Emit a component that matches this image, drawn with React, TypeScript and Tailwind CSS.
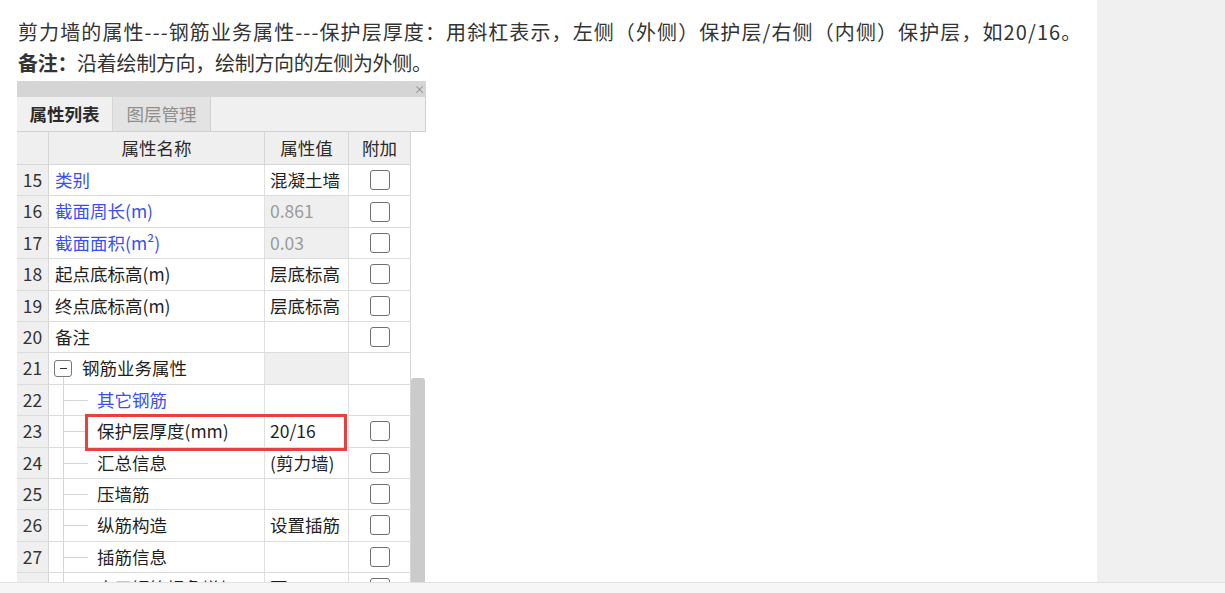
const FONT = '"Microsoft YaHei", "Noto Sans CJK SC", "Noto Sans", sans-serif';

type Row = {
  no: number;
  name: string;
  value?: string;
  blue?: boolean;
  grayValue?: boolean;
  check?: boolean;
  level?: 0 | 1 | 2;
  mark?: boolean;
};

const ROWS: Row[] = [
  { no: 15, name: '类别', value: '混凝土墙', blue: true, check: true },
  { no: 16, name: '截面周长(m)', value: '0.861', blue: true, grayValue: true, check: true },
  { no: 17, name: '截面面积(m²)', value: '0.03', blue: true, grayValue: true, check: true },
  { no: 18, name: '起点底标高(m)', value: '层底标高', check: true },
  { no: 19, name: '终点底标高(m)', value: '层底标高', check: true },
  { no: 20, name: '备注', check: true },
  { no: 21, name: '钢筋业务属性', level: 1, grayValue: true },
  { no: 22, name: '其它钢筋', level: 2, blue: true },
  { no: 23, name: '保护层厚度(mm)', value: '20/16', level: 2, check: true, mark: true },
  { no: 24, name: '汇总信息', value: '(剪力墙)', level: 2, check: true },
  { no: 25, name: '压墙筋', level: 2, check: true },
  { no: 26, name: '纵筋构造', value: '设置插筋', level: 2, check: true },
  { no: 27, name: '插筋信息', level: 2, check: true },
  { no: 28, name: '水平钢筋拐角增加', value: '否', level: 2, check: true },
];

function Checkbox() {
  return <span className="block w-[20px] h-[20px] rounded-[3px] border border-[#6f6f6f] bg-white" />;
}

function NameCell({ row }: { row: Row }) {
  const color = row.blue ? 'text-[#3a4ff0]' : 'text-[#1f1f1f]';
  if (row.level === 1) {
    return (
      <div className="relative flex items-center h-full pl-[5px]">
        <span className="relative z-10 flex items-center justify-center w-[18px] h-[17px] rounded-[3px] border border-[#777] bg-white">
          <span className="block w-[7px] h-[1.5px] bg-[#333]" />
        </span>
        <span className="ml-[10px] text-[#1f1f1f]">{row.name}</span>
        {/* tree trunk going down */}
        <span className="absolute left-[14px] top-[24px] bottom-0 w-px bg-[#d4d4d4]" />
      </div>
    );
  }
  if (row.level === 2) {
    return (
      <div className="relative flex items-center h-full pl-[48px]">
        <span className="absolute left-[14px] top-0 bottom-0 w-px bg-[#d4d4d4]" />
        <span className="absolute left-[14px] top-1/2 w-[25px] h-px bg-[#d4d4d4]" />
        <span className={color}>{row.name}</span>
      </div>
    );
  }
  return <div className={`flex items-center h-full pl-[6px] ${color}`}>{row.name}</div>;
}

function PropertyPanel() {
  return (
    <div className="mt-[3px] ml-[17px] w-[409px] flex-1 flex flex-col overflow-hidden text-[17.5px]" style={{ fontFamily: FONT }}>
      <div className="h-[16px] bg-[#d5d5d5] flex items-center justify-end pr-[1px] shrink-0">
        <span className="text-[11px] leading-none text-[#8a8a8a]">×</span>
      </div>
      <div className="h-[35px] shrink-0 bg-[#f0f0f0] border-b border-r border-[#d0d0d0] flex">
        <div className="w-[96px] flex items-center justify-center font-bold text-[#2a2a2a] border-r border-[#d6d6d6]">属性列表</div>
        <div className="w-[98px] flex items-center justify-center text-[#8f8f8f] bg-[#e3e3e3] border-r border-[#d0d0d0]">图层管理</div>
      </div>
      <div className="flex flex-1 min-h-0">
        <div className="w-[394px] flex flex-col">
          <div className="grid grid-cols-[32px_216px_84px_62px] h-[33px] shrink-0 bg-[#efefef] border-b border-[#d6d6d6] text-[#2a2a2a]">
            <div className="border-r border-[#d6d6d6]" />
            <div className="flex items-center justify-center border-r border-[#d6d6d6]">属性名称</div>
            <div className="flex items-center justify-center border-r border-[#d6d6d6]">属性值</div>
            <div className="flex items-center justify-center border-r border-[#d6d6d6]">附加</div>
          </div>
          {ROWS.map(row => (
            <div key={row.no} className="relative grid grid-cols-[32px_216px_84px_62px] h-[31.4px] shrink-0 border-b border-[#dcdcdc] bg-white">
              <div className="flex items-center justify-center bg-[#efefef] border-r border-[#d6d6d6] text-[#333]">{row.no}</div>
              <div className="border-r border-[#e0e0e0]">
                <NameCell row={row} />
              </div>
              <div className={`flex items-center pl-[5px] border-r border-[#e0e0e0] whitespace-nowrap ${row.grayValue ? 'bg-[#efefef] text-[#9a9a9a]' : 'text-[#1f1f1f]'}`}>
                {row.value}
              </div>
              <div className="flex items-center justify-center border-r border-[#d6d6d6]">
                {row.check && <Checkbox />}
              </div>
              {row.mark && (
                <div className="absolute z-20 left-[68px] top-[-2px] w-[262px] h-[37px] border-[3px] border-[#e8403f] pointer-events-none" />
              )}
            </div>
          ))}
        </div>
        <div className="w-[15px] bg-white flex justify-end pr-[1px]">
          <div className="mt-[246px] w-[7px] flex-1 rounded-t-[3px] bg-[#cbcbcb]" />
        </div>
      </div>
    </div>
  );
}

export default function App() {
  return (
    <div className="w-[1225px] h-[593px] flex flex-col bg-[#f6f6f6] overflow-hidden" style={{ fontFamily: FONT }}>
      <div className="h-[583px] flex border-b border-[#e2e2e2] shrink-0">
        <div className="w-[1097px] bg-white flex flex-col pt-[16px] overflow-hidden">
          <div className="pl-[18px] text-[20px] leading-[31px] text-[#333]">
            <p className="tracking-[1.1px] whitespace-nowrap">剪力墙的属性---钢筋业务属性---保护层厚度：用斜杠表示，左侧（外侧）保护层/右侧（内侧）保护层，如20/16。</p>
            <p className="tracking-[-0.3px]"><span className="font-bold">备注：</span>沿着绘制方向，绘制方向的左侧为外侧。</p>
          </div>
          <PropertyPanel />
        </div>
        <div className="flex-1 bg-[#f0f0f0]" />
      </div>
    </div>
  );
}
